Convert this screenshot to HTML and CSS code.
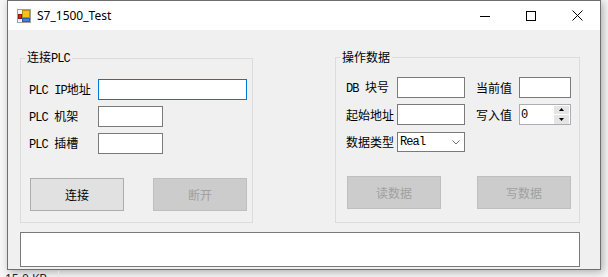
FILE: index.html
```html
<!DOCTYPE html>
<html>
<head>
    <meta charset="utf-8">
    <title>S7_1500_Test</title>
    <link rel="stylesheet" href="styles.css">
</head>
<body>
    <div class="window">
        <div class="titlebar">
            <svg class="app-icon" width="14" height="14" viewBox="0 0 14 14">
                <rect x="0.5" y="0.5" width="13" height="13" fill="#f4f4f4" stroke="#a0a0a0"/>
                <rect x="1.5" y="5.5" width="3" height="4" fill="#d9261c" stroke="#8c1a14"/>
                <rect x="5.5" y="1.5" width="7" height="7" fill="#f6c21c" stroke="#b98a0c"/>
                <rect x="5.5" y="9.5" width="7" height="3" fill="#3f86e0" stroke="#2a5fa8"/>
            </svg>
            <span class="title">S7_1500_Test</span>
            <div class="caption-buttons">
                <div class="cap-btn">
                    <svg width="10" height="10" viewBox="0 0 10 10"><path d="M0 5.5H10" stroke="#000" stroke-width="1"/></svg>
                </div>
                <div class="cap-btn">
                    <svg width="10" height="10" viewBox="0 0 10 10"><rect x="0.5" y="0.5" width="9" height="9" fill="none" stroke="#000"/></svg>
                </div>
                <div class="cap-btn">
                    <svg width="11" height="11" viewBox="0 0 11 11"><path d="M0.5 0.5L10.5 10.5M10.5 0.5L0.5 10.5" stroke="#000" stroke-width="1"/></svg>
                </div>
            </div>
        </div>

        <div class="client">
            <div class="groups">
                <fieldset class="group group-conn">
                    <legend class="legend-conn">连接<span class="en">PLC</span></legend>
                    <div class="form form-conn">
                        <label><span class="en">PLC IP</span>地址</label>
                        <input type="text" class="tb focused">
                        <label><span class="en">PLC </span>机架</label>
                        <input type="text" class="tb short">
                        <label><span class="en">PLC </span>插槽</label>
                        <input type="text" class="tb short">
                    </div>
                    <div class="btn-row">
                        <button class="btn">连接</button>
                        <button class="btn" disabled>断开</button>
                    </div>
                </fieldset>

                <fieldset class="group group-data">
                    <legend class="legend-data">操作数据</legend>
                    <div class="form form-data">
                        <label><span class="en">DB </span>块号</label>
                        <input type="text" class="tb">
                        <label class="lbl-right">当前值</label>
                        <input type="text" class="tb">

                        <label>起始地址</label>
                        <input type="text" class="tb">
                        <label class="lbl-right">写入值</label>
                        <div class="updown">
                            <span class="updown-value">0</span>
                            <div class="spin">
                                <div class="spin-btn"><svg width="5" height="3" viewBox="0 0 5 3"><path d="M2.5 0L5 3H0Z" fill="#000"/></svg></div>
                                <div class="spin-btn"><svg width="5" height="3" viewBox="0 0 5 3"><path d="M0 0H5L2.5 3Z" fill="#000"/></svg></div>
                            </div>
                        </div>

                        <label>数据类型</label>
                        <div class="combo">
                            <span class="combo-value en">Real</span>
                            <svg width="8" height="5" viewBox="0 0 8 5"><path d="M0.5 0.5L4 4L7.5 0.5" fill="none" stroke="#707070"/></svg>
                        </div>
                    </div>
                    <div class="btn-row">
                        <button class="btn" disabled>读数据</button>
                        <button class="btn" disabled>写数据</button>
                    </div>
                </fieldset>
            </div>

            <div class="log"></div>
        </div>
    </div>

    <div class="statusbar">
        <span class="size">15.0 KB</span>
    </div>
</body>
</html>
```

FILE: styles.css
```css
body {
    margin: 0;
    background-color: #f6f6f6;
    font-family: "Noto Sans CJK SC", sans-serif;
    font-size: 12px;
    color: #000;
}

.window {
    width: 594px;
    height: 270px;
    box-sizing: border-box;
    margin-left: 7px;
    border: 1px solid #6f6f6f;
    background-color: #f0f0f0;
    box-shadow: 2px 2px 8px rgba(0, 0, 0, 0.3);
}

/* 标题栏 */
.titlebar {
    height: 29px;
    background-color: #fff;
    display: flex;
    align-items: center;
}

.app-icon {
    margin-left: 9px;
    margin-top: 1px;
}

.title {
    margin-left: 6px;
    font-family: "Noto Sans", sans-serif;
    font-size: 12px;
    color: #000;
}

.caption-buttons {
    margin-left: auto;
    display: flex;
    height: 100%;
}

.cap-btn {
    width: 46px;
    height: 100%;
    display: flex;
    align-items: center;
    justify-content: center;
}

/* 客户区 */
.client {
    padding: 19px 20px 2px 12px;
}

.groups {
    display: flex;
    gap: 82px;
}

.group {
    margin: 0;
    border: 1px solid #dcdcdc;
    min-width: 0;
    box-sizing: border-box;
}

.group legend {
    font-size: 12px;
    line-height: 16px;
    padding: 0 2px;
}

.group-conn {
    width: 233px;
    padding: 12px 5px 11px 8px;
}

.legend-conn {
    margin-left: -4px;
}

.group-data {
    width: 245px;
    padding: 12px 8px 11px 10px;
}

.legend-data {
    margin-left: -6px;
}

.en {
    font-family: "Liberation Mono", monospace;
    font-size: 12px;
    letter-spacing: -0.9px;
}

.form {
    display: grid;
    grid-auto-rows: 21px;
    row-gap: 6px;
    align-items: center;
}

.form label {
    line-height: 14px;
    white-space: pre;
}

.form-conn {
    grid-template-columns: 69px 149px;
}

.form-data {
    grid-template-columns: 51px 68px 54px 52px;
}

.lbl-right {
    margin-left: 11px;
}

.tb {
    box-sizing: border-box;
    height: 21px;
    width: 100%;
    margin: 0;
    padding: 0 2px;
    border: 1px solid #7a7a7a;
    background-color: #fff;
    outline: none;
}

.tb.short {
    width: 65px;
}

.tb.focused {
    border-color: #0078d7;
}

/* 数值框 */
.updown {
    box-sizing: border-box;
    height: 21px;
    border: 1px solid #abadb3;
    background-color: #fff;
    display: flex;
    align-items: center;
}

.updown-value {
    font-family: "Liberation Mono", monospace;
    font-size: 12px;
    padding-left: 1px;
    flex: 1;
}

.spin {
    width: 15px;
    height: 18px;
    margin-right: 1px;
    display: flex;
    flex-direction: column;
    gap: 1px;
}

.spin-btn {
    flex: 1;
    background-color: #e5e5e5;
    display: flex;
    align-items: center;
    justify-content: center;
}

/* 下拉框 */
.combo {
    box-sizing: border-box;
    height: 20px;
    margin-top: 1px;
    border: 1px solid #7a7a7a;
    background-color: #fff;
    display: flex;
    align-items: center;
    padding: 0 4px 0 2px;
}

.combo-value {
    flex: 1;
}

/* 按钮 */
.btn-row {
    display: flex;
    justify-content: space-between;
    margin-top: 24px;
    padding-left: 1px;
}

.btn {
    width: 94px;
    height: 33px;
    margin: 0;
    padding: 0;
    font-family: "Noto Sans CJK SC", sans-serif;
    font-size: 12px;
    color: #000;
    background-color: #e1e1e1;
    border: 1px solid #adadad;
}

.btn:disabled {
    background-color: #cccccc;
    border-color: #bfbfbf;
    color: #a0a0a0;
}

.log {
    margin-top: 9px;
    height: 35px;
    box-sizing: border-box;
    border: 1px solid #7a7a7a;
    background-color: #fff;
}

/* 底部状态栏 */
.statusbar {
    height: 20px;
    padding-left: 5px;
    font-family: "Noto Sans", sans-serif;
    font-size: 12px;
    color: #1e1e1e;
}

.size {
    display: inline-block;
    width: 53px;
    line-height: 16px;
    border-right: 1px solid #e3e3e3;
}
```
